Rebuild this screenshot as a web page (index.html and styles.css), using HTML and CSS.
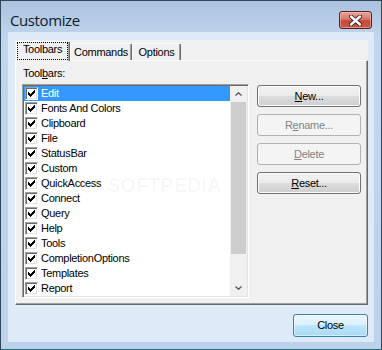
FILE: index.html
```html
<!DOCTYPE html>
<html>
<head>
<meta charset="utf-8">
<link rel="stylesheet" href="styles.css">
</head>
<body>
<svg class="defs" width="0" height="0">
  <defs>
    <symbol id="chk" viewBox="0 0 7 7">
      <path d="M0 2h1v3h-1z M1 3h1v3h-1z M2 4h1v3h-1z M3 3h1v3h-1z M4 2h1v3h-1z M5 1h1v3h-1z M6 0h1v3h-1z" fill="#000"/>
    </symbol>
  </defs>
</svg>
<div class="window">
  <div class="titlebar">
    <span class="title">Customize</span>
    <div class="xbtn">
      <svg width="13" height="11" viewBox="0 0 13 11">
        <path d="M2 1.5 L11 9.5 M11 1.5 L2 9.5" stroke="#3a1414" stroke-width="4.2" stroke-linecap="round"/>
        <path d="M2 1.5 L11 9.5 M11 1.5 L2 9.5" stroke="#ffffff" stroke-width="2.4" stroke-linecap="round"/>
      </svg>
    </div>
  </div>
  <div class="client">
    <div class="tabctl">
      <div class="tabs">
        <div class="tab active"><div class="focus">Toolbars</div></div>
        <div class="tab t-commands">Commands</div>
        <div class="tab t-options">Options</div>
      </div>
      <div class="panel">
        <div class="label">Tool<u>b</u>ars:</div>
        <div class="panel-body">
          <div class="listbox">
            <div class="rows">
              <div class="row sel"><span class="cb"><svg><use href="#chk"/></svg></span>Edit</div>
              <div class="row"><span class="cb"><svg><use href="#chk"/></svg></span>Fonts And Colors</div>
              <div class="row"><span class="cb"><svg><use href="#chk"/></svg></span>Clipboard</div>
              <div class="row"><span class="cb"><svg><use href="#chk"/></svg></span>File</div>
              <div class="row"><span class="cb"><svg><use href="#chk"/></svg></span>StatusBar</div>
              <div class="row"><span class="cb"><svg><use href="#chk"/></svg></span>Custom</div>
              <div class="row"><span class="cb"><svg><use href="#chk"/></svg></span>QuickAccess</div>
              <div class="row"><span class="cb"><svg><use href="#chk"/></svg></span>Connect</div>
              <div class="row"><span class="cb"><svg><use href="#chk"/></svg></span>Query</div>
              <div class="row"><span class="cb"><svg><use href="#chk"/></svg></span>Help</div>
              <div class="row"><span class="cb"><svg><use href="#chk"/></svg></span>Tools</div>
              <div class="row"><span class="cb"><svg><use href="#chk"/></svg></span>CompletionOptions</div>
              <div class="row"><span class="cb"><svg><use href="#chk"/></svg></span>Templates</div>
              <div class="row"><span class="cb"><svg><use href="#chk"/></svg></span>Report</div>
            </div>
            <div class="vscroll">
              <div class="arrow up">
                <svg width="7" height="4" viewBox="0 0 7 4"><path d="M0.5 3.5 L3.5 0.8 L6.5 3.5" fill="none" stroke="#5a5a5a" stroke-width="1.4"/></svg>
              </div>
              <div class="thumb"></div>
              <div class="track"></div>
              <div class="arrow down">
                <svg width="7" height="4" viewBox="0 0 7 4"><path d="M0.5 0.5 L3.5 3.2 L6.5 0.5" fill="none" stroke="#5a5a5a" stroke-width="1.4"/></svg>
              </div>
            </div>
            <div class="watermark">SOFTPEDIA</div>
          </div>
          <div class="buttons">
            <div class="btn"><u>N</u>ew...</div>
            <div class="btn disabled">R<u>e</u>name...</div>
            <div class="btn disabled"><u>D</u>elete</div>
            <div class="btn"><u>R</u>eset...</div>
          </div>
        </div>
      </div>
    </div>
    <div class="footer">
      <div class="btn default">Close</div>
    </div>
  </div>
</div>
</body>
</html>
```

FILE: styles.css
```css
html, body {
  margin: 0;
  padding: 0;
  background: #ffffff;
}
.defs {
  position: absolute;
  width: 0;
  height: 0;
}
.window {
  width: 382px;
  height: 350px;
  box-sizing: border-box;
  border: 1px solid #34465a;
  border-bottom-color: #1f6f80;
  background: linear-gradient(#a9c2de 0px, #b7cde7 20px, #c2d6ed 40px, #bcd2ea 100%);
  display: flex;
  flex-direction: column;
  font-family: "Liberation Sans", Arial, sans-serif;
  font-size: 11px;
  letter-spacing: -0.3px;
  color: #000;
}
.titlebar {
  height: 31px;
  flex: none;
  display: flex;
  justify-content: space-between;
  align-items: flex-start;
}
.title {
  font-family: "Open Sans", "Noto Sans", sans-serif;
  font-size: 15px;
  line-height: 20px;
  letter-spacing: -0.4px;
  color: #0f1a26;
  margin: 9px 0 0 9px;
}
.xbtn {
  width: 33px;
  height: 18px;
  box-sizing: border-box;
  margin: 10px 9px 0 0;
  border: 1px solid #5a2020;
  border-radius: 3px;
  background: linear-gradient(#e8a69c 0%, #d8786b 45%, #c4493c 55%, #c75a48 100%);
  box-shadow: inset 0 0 0 1px rgba(255, 200, 190, 0.5);
  display: flex;
  align-items: center;
  justify-content: center;
}
.client {
  flex: 1;
  margin: 0 7px 7px 7px;
  background: #dfeaf8;
  padding: 8px 6px 5px 7px;
  display: flex;
  flex-direction: column;
  gap: 9px;
}
.tabctl {
  height: 265px;
  flex: none;
  background: #f0f0f0;
  display: flex;
  flex-direction: column;
}
.tabs {
  height: 20px;
  flex: none;
  display: flex;
  align-items: flex-end;
  padding-left: 1px;
  position: relative;
  z-index: 1;
}
.tab {
  box-sizing: border-box;
  height: 17px;
  border-left: 1px solid #ffffff;
  border-top: 1px solid #ffffff;
  border-right: 1px solid #696969;
  border-radius: 2px 2px 0 0;
  box-shadow: inset -1px 0 #a0a0a0;
  background: #f0f0f0;
  line-height: 16px;
  text-align: center;
}
.t-commands { width: 62px; }
.t-options { width: 49px; }
.tab.active {
  width: 54px;
  height: 20px;
  margin-bottom: -1px;
  padding: 0 1px 1px 0;
}
.focus {
  box-sizing: border-box;
  height: 18px;
  border: 1px dotted #000;
  line-height: 13px;
  text-align: center;
}
.panel {
  flex: 1;
  box-sizing: border-box;
  border-top: 1px solid #ffffff;
  border-left: 1px solid #ffffff;
  border-right: 1px solid #696969;
  border-bottom: 1px solid #696969;
  box-shadow: inset -1px -1px #a0a0a0;
  padding: 6px 6px 0 6px;
  display: flex;
  flex-direction: column;
}
.label {
  line-height: 13px;
  margin-left: 1px;
}
.panel-body {
  margin-top: 4px;
  display: flex;
  gap: 8px;
}
.listbox {
  position: relative;
  width: 227px;
  height: 214px;
  box-sizing: border-box;
  border: 1px solid;
  border-color: #a0a0a0 #ffffff #ffffff #a0a0a0;
  box-shadow: inset 1px 1px #696969, inset -1px -1px #e3e3e3;
  padding: 1px;
  background: #ffffff;
  display: flex;
  overflow: hidden;
}
.rows {
  flex: 1;
  display: flex;
  flex-direction: column;
}
.row {
  height: 15px;
  flex: none;
  display: flex;
  align-items: center;
  padding-left: 1px;
  line-height: 15px;
  white-space: nowrap;
}
.row.sel {
  background: #3399ff;
  color: #ffffff;
}
.cb {
  width: 13px;
  height: 13px;
  box-sizing: border-box;
  border: 1px solid;
  border-color: #a0a0a0 #ffffff #ffffff #a0a0a0;
  box-shadow: inset 1px 1px #696969, inset -1px -1px #e3e3e3;
  background: #ffffff;
  margin-right: 3px;
  padding: 2px 0 0 2px;
  flex: none;
}
.cb svg {
  display: block;
  width: 7px;
  height: 7px;
  shape-rendering: crispEdges;
}
.vscroll {
  width: 17px;
  flex: none;
  background: #f0f0f0;
  display: flex;
  flex-direction: column;
}
.arrow {
  height: 16px;
  flex: none;
  display: flex;
  align-items: center;
  justify-content: center;
}
.arrow.down { height: 17px; }
.thumb {
  height: 152px;
  flex: none;
  margin: 0 1px;
  background: #cdcdcd;
}
.track { flex: 1; }
.watermark {
  position: absolute;
  left: 84px;
  top: 88px;
  font-size: 20px;
  line-height: 24px;
  font-weight: bold;
  letter-spacing: 0;
  color: rgba(0, 0, 0, 0.03);
  pointer-events: none;
}
.buttons {
  margin-top: 1px;
  display: flex;
  flex-direction: column;
  gap: 7px;
}
.btn {
  width: 104px;
  height: 22px;
  box-sizing: border-box;
  border: 1px solid #707070;
  border-radius: 3px;
  background: linear-gradient(#f2f2f2 0%, #ebebeb 50%, #dddddd 50%, #cfcfcf 100%);
  box-shadow: inset 0 0 0 1px #fcfcfc;
  display: flex;
  align-items: center;
  justify-content: center;
  line-height: 13px;
}
.btn.disabled {
  border-color: #adb2b5;
  background: #f4f4f4;
  color: #838383;
  box-shadow: none;
}
.footer {
  display: flex;
  justify-content: flex-end;
}
.btn.default {
  width: 75px;
  height: 23px;
  border-color: #3c7fb1;
  background: linear-gradient(#eaf6fd 0%, #d9f0fc 50%, #bee6fd 50%, #a7d9f5 100%);
  box-shadow: inset 0 0 0 1px rgba(255, 255, 255, 0.55);
}
```
